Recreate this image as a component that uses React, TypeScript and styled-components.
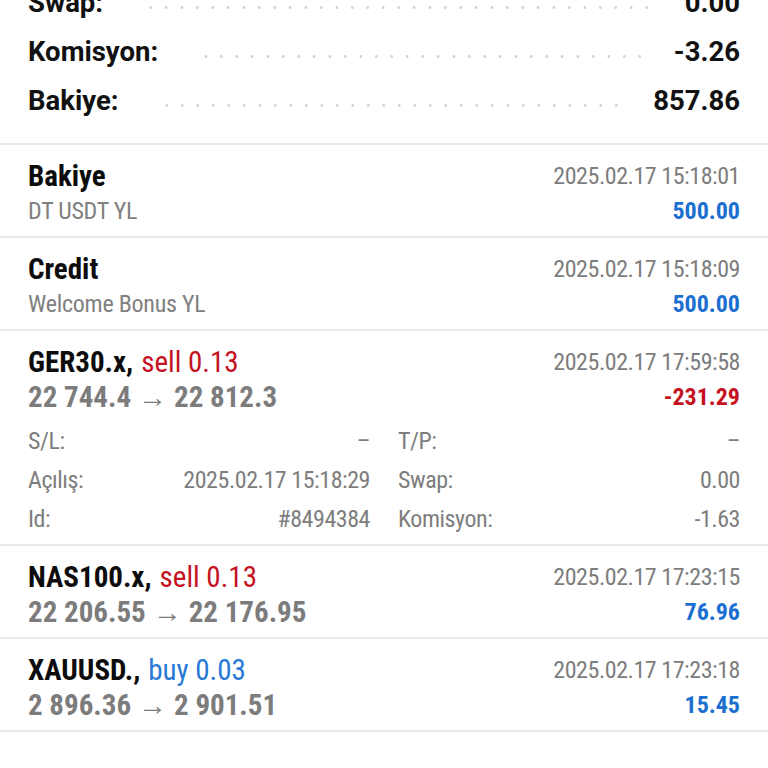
import React from "react";
import styled, { createGlobalStyle } from "styled-components";

const Global = createGlobalStyle`
  html, body { margin: 0; padding: 0; background: #ffffff; }
  body { font-family: Roboto, "Noto Sans", sans-serif; overflow: hidden; }
  #root { width: 768px; height: 768px; overflow: hidden; }
`;

const Page = styled.div`
  width: 768px;
  height: 768px;
  overflow: hidden;
  background: #fff;
`;

const Summary = styled.section`
  margin-top: -22px;
  padding: 0 28px 18px 28px;
  border-bottom: 2px solid #e9e9e9;
`;

const SumRow = styled.div`
  display: flex;
  align-items: center;
  height: 49px;
  font-family: Roboto, sans-serif;
  font-weight: 700;
  font-size: 27.5px;
  color: #111;
`;

const Leader = styled.div`
  flex: 1;
  align-self: center;
  height: 3px;
  margin: 10px 24px 0 40px;
  background-image: radial-gradient(circle, #d3d3d3 1.2px, transparent 1.6px);
  background-size: 15.5px 3px;
  background-repeat: repeat-x;
`;

const cond = `
  font-family: "Roboto Condensed", Roboto, sans-serif;
  font-stretch: condensed;
`;

const Item = styled.div`
  padding: 13px 28px 8px 28px;
  border-bottom: 2px solid #e9e9e9;
  ${cond}
`;

const Head = styled.div`
  display: flex;
  justify-content: space-between;
`;

const Col = styled.div<{ $right?: boolean }>`
  display: flex;
  flex-direction: column;
  align-items: ${(p) => (p.$right ? "flex-end" : "flex-start")};
`;

const Line = styled.div`
  height: 35px;
  display: flex;
  align-items: center;
  white-space: nowrap;
`;

const Title = styled(Line)`
  font-size: 29px;
  font-weight: 700;
  color: #0c0c0c;
`;

const Side = styled.span<{ $tone: "sell" | "buy" }>`
  font-weight: 400;
  margin-left: 8px;
  color: ${(p) => (p.$tone === "sell" ? "#c4121f" : "#2878d6")};
`;

const Sub = styled(Line)`
  font-size: 24px;
  letter-spacing: -0.25px;
  color: #808080;
`;

const Prices = styled(Line)`
  font-size: 29px;
  font-weight: 700;
  color: #7c7c7c;
`;

const Arrow = styled.span`
  font-weight: 400;
  margin: 0 7px;
`;

const Time = styled(Line)`
  font-size: 24px;
  letter-spacing: -0.45px;
  color: #7d7d7d;
`;

const Amount = styled(Line)<{ $neg?: boolean }>`
  font-size: 24px;
  font-weight: 700;
  color: ${(p) => (p.$neg ? "#c4121f" : "#1b6fd0")};
`;

const Details = styled.div`
  display: grid;
  grid-template-columns: 1fr 1fr;
  column-gap: 28px;
  margin-top: 7px;
  margin-bottom: -2px;
`;

const DRow = styled.div`
  height: 39px;
  display: flex;
  align-items: center;
  justify-content: space-between;
  font-size: 24px;
  letter-spacing: -0.45px;
  color: #7d7d7d;
`;

const sumRows = [
  ["Swap:", "0.00"],
  ["Komisyon:", "-3.26"],
  ["Bakiye:", "857.86"],
];

type Deal = {
  title: string;
  side?: { tone: "sell" | "buy"; text: string };
  sub?: string;
  prices?: [string, string];
  time: string;
  amount: string;
  neg?: boolean;
  details?: [string, string][];
};

const deals: Deal[] = [
  { title: "Bakiye", sub: "DT USDT YL", time: "2025.02.17 15:18:01", amount: "500.00" },
  { title: "Credit", sub: "Welcome Bonus YL", time: "2025.02.17 15:18:09", amount: "500.00" },
  {
    title: "GER30.x,",
    side: { tone: "sell", text: "sell 0.13" },
    prices: ["22 744.4", "22 812.3"],
    time: "2025.02.17 17:59:58",
    amount: "-231.29",
    neg: true,
    details: [
      ["S/L:", "\u2013"],
      ["T/P:", "\u2013"],
      ["Açılış:", "2025.02.17 15:18:29"],
      ["Swap:", "0.00"],
      ["Id:", "#8494384"],
      ["Komisyon:", "-1.63"],
    ],
  },
  {
    title: "NAS100.x,",
    side: { tone: "sell", text: "sell 0.13" },
    prices: ["22 206.55", "22 176.95"],
    time: "2025.02.17 17:23:15",
    amount: "76.96",
  },
  {
    title: "XAUUSD.,",
    side: { tone: "buy", text: "buy 0.03" },
    prices: ["2 896.36", "2 901.51"],
    time: "2025.02.17 17:23:18",
    amount: "15.45",
  },
];

export default function App() {
  return (
    <Page>
      <Global />
      <Summary>
        {sumRows.map(([l, v]) => (
          <SumRow key={l}>
            <span>{l}</span>
            <Leader />
            <span>{v}</span>
          </SumRow>
        ))}
      </Summary>
      {deals.map((d) => (
        <Item key={d.time}>
          <Head>
            <Col>
              <Title>
                {d.title}
                {d.side && <Side $tone={d.side.tone}>{d.side.text}</Side>}
              </Title>
              {d.sub && <Sub>{d.sub}</Sub>}
              {d.prices && (
                <Prices>
                  {d.prices[0]}
                  <Arrow>→</Arrow>
                  {d.prices[1]}
                </Prices>
              )}
            </Col>
            <Col $right>
              <Time>{d.time}</Time>
              <Amount $neg={d.neg}>{d.amount}</Amount>
            </Col>
          </Head>
          {d.details && (
            <Details>
              {d.details.map(([l, v]) => (
                <DRow key={l}>
                  <span>{l}</span>
                  <span>{v}</span>
                </DRow>
              ))}
            </Details>
          )}
        </Item>
      ))}
    </Page>
  );
}
